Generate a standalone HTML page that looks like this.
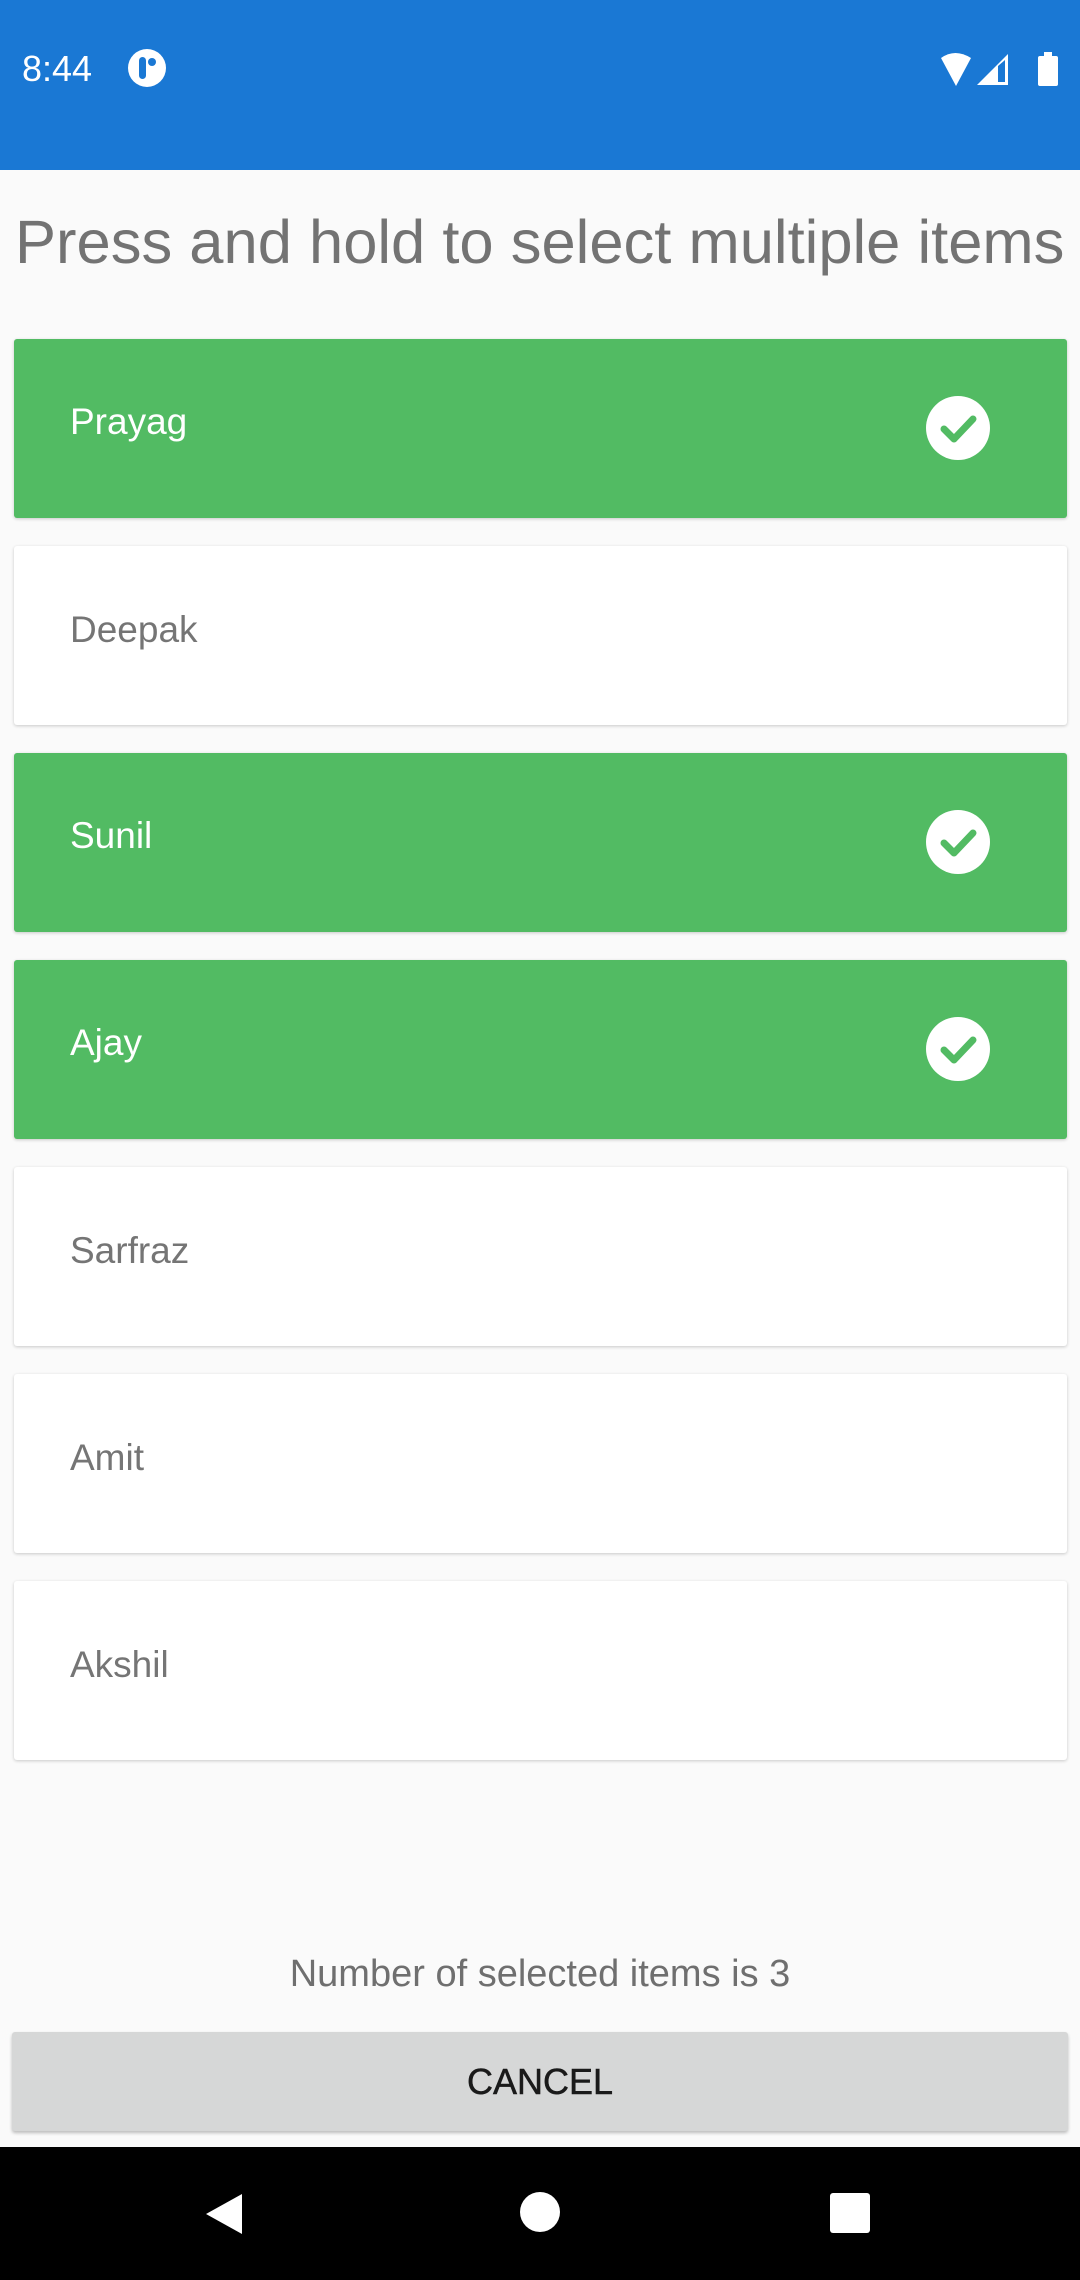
<!DOCTYPE html>
<html><head><meta charset="utf-8"><style>
body{margin:0;width:1080px;height:2280px;background:#fafafa;position:relative;overflow:hidden;font-family:"Liberation Sans",Roboto,sans-serif}
.sb{position:absolute;left:0;top:0;width:1080px;height:170px;background:#1a78d4}
.t{position:absolute;left:22px;top:48px;color:#fff;font-size:36px}
.title{position:absolute;left:15px;top:207px;font-size:61.5px;color:#737373;white-space:nowrap}
.card{position:absolute;left:14px;width:1053px;height:179px;background:#fff;border-radius:3px;box-shadow:0 1px 3px rgba(0,0,0,.2)}
.card span{position:absolute;left:56px;top:63px;font-size:37px;color:#757575}
.sel{background:#52bb63}
.sel span{color:#fff;top:62px}
.ck{position:absolute;left:912px;top:57px;width:64px;height:64px;border-radius:50%;background:#fff}
.cnt{position:absolute;left:0;width:1080px;top:1953px;text-align:center;font-size:38px;color:#6f6f6f}
.btn{position:absolute;left:12px;top:2032px;width:1056px;height:99px;background:#d6d7d7;border-radius:3px;box-shadow:0 2px 3px rgba(0,0,0,.25);text-align:center;line-height:100px;font-size:36px;color:#1a1a1a;-webkit-text-stroke:0.5px #1a1a1a}
.nav{position:absolute;left:0;top:2147px;width:1080px;height:133px;background:#000}
</style></head><body>
<div class="sb">
<div class="t">8:44</div>
<svg style="position:absolute;left:127px;top:48px" width="40" height="40" viewBox="0 0 40 40"><circle cx="20" cy="20" r="19" fill="#fff"/><rect x="12" y="9" width="7" height="22" rx="3.5" fill="#1a78d4"/><circle cx="25" cy="14" r="4" fill="#1a78d4"/></svg>
<svg style="position:absolute;left:935px;top:50px" width="130" height="40" viewBox="0 0 130 40"><path d="M6 8 Q20 -2 36 8 L21 36 Z" fill="#fff"/><path d="M42 35 L73 4 L73 35 Z" fill="#fff"/><path d="M63 16 L70 10 L70 32 L63 32 Z" fill="#1a78d4"/><rect x="103" y="6" width="20" height="30" rx="2" fill="#fff"/><rect x="109" y="2" width="8" height="5" fill="#fff"/></svg>
</div>
<div class="title">Press and hold to select multiple items</div>
<div class="card sel" style="top:339px"><span>Prayag</span><svg class="ck" viewBox="0 0 64 64"><path d="M18 33 L28 43 L47 23" stroke="#52bb63" stroke-width="7" fill="none" stroke-linecap="round" stroke-linejoin="round"/></svg></div>
<div class="card" style="top:546px"><span>Deepak</span></div>
<div class="card sel" style="top:753px"><span>Sunil</span><svg class="ck" viewBox="0 0 64 64"><path d="M18 33 L28 43 L47 23" stroke="#52bb63" stroke-width="7" fill="none" stroke-linecap="round" stroke-linejoin="round"/></svg></div>
<div class="card sel" style="top:960px"><span>Ajay</span><svg class="ck" viewBox="0 0 64 64"><path d="M18 33 L28 43 L47 23" stroke="#52bb63" stroke-width="7" fill="none" stroke-linecap="round" stroke-linejoin="round"/></svg></div>
<div class="card" style="top:1167px"><span>Sarfraz</span></div>
<div class="card" style="top:1374px"><span>Amit</span></div>
<div class="card" style="top:1581px"><span>Akshil</span></div>
<div class="cnt">Number of selected items is 3</div>
<div class="btn">CANCEL</div>
<div class="nav">
<svg style="position:absolute;left:200px;top:42px" width="50" height="50" viewBox="0 0 50 50"><path d="M6 25 L42 5 L42 45 Z" fill="#fff"/></svg>
<svg style="position:absolute;left:520px;top:45px" width="40" height="40"><circle cx="20" cy="20" r="20" fill="#fff"/></svg>
<svg style="position:absolute;left:830px;top:46px" width="40" height="40"><rect width="40" height="40" rx="3" fill="#fff"/></svg>
</div>
</body></html>
